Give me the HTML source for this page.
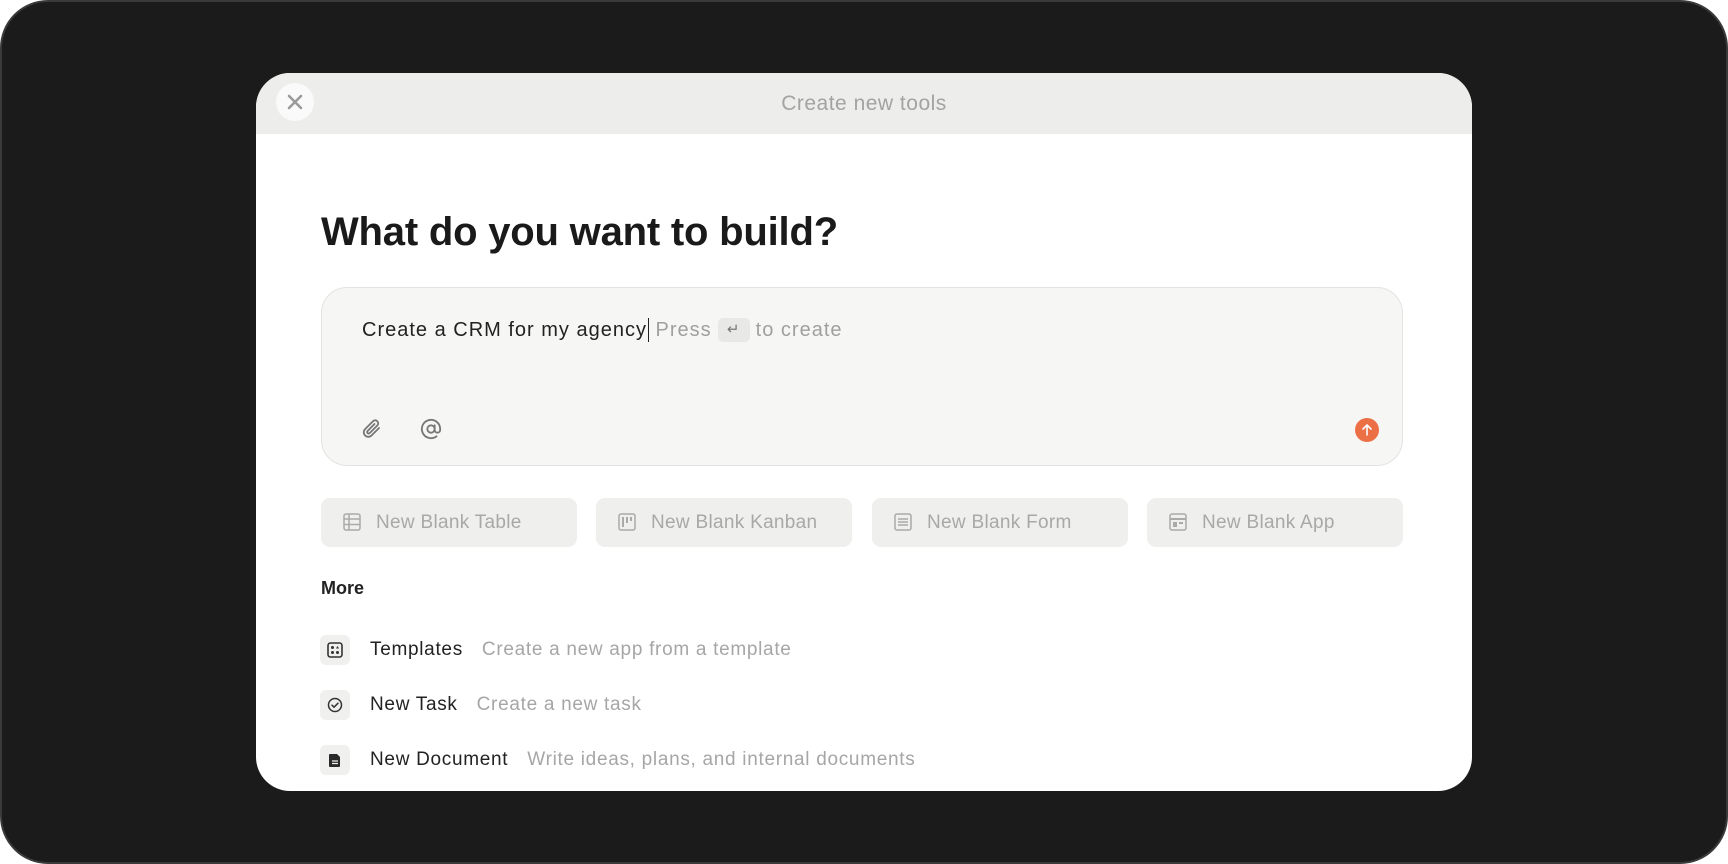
<!DOCTYPE html>
<html><head><style>
*{box-sizing:border-box;margin:0;padding:0}
html,body{width:1728px;height:864px;background:#fff;overflow:hidden;font-family:"Liberation Sans",sans-serif}
.frame{position:absolute;left:0;top:0;width:1728px;height:864px;background:#1b1b1b;border-radius:48px;border:2px solid #3a3a3a}
.modal{position:absolute;left:256px;top:73px;width:1216px;height:718px;background:#fff;border-radius:34px;overflow:hidden}
.hdr{height:61px;background:#ededeb;position:relative}
.hdr .t{position:absolute;left:0;right:0;top:0;line-height:61px;text-align:center;color:#a3a3a3;font-size:21px;letter-spacing:.5px}
.close{position:absolute;left:20px;top:10px;width:38px;height:38px;border-radius:50%;background:#fafafa}
h1{position:absolute;left:65px;top:137px;font-size:40px;font-weight:700;color:#1a1a1a;letter-spacing:-.2px}
.inp{position:absolute;left:65px;top:214px;width:1082px;height:179px;background:#f6f6f5;border:1.5px solid #e3e3e1;border-radius:26px}
.inp .tx{position:absolute;left:40px;top:30px;font-size:20px;color:#222;letter-spacing:1px;white-space:nowrap;line-height:24px}
.gray{color:#a0a0a0}
.kbd{display:inline-block;width:32px;height:24px;background:#e8e8e6;border-radius:5px;vertical-align:top;text-align:center;line-height:24px;font-size:15px;color:#777;margin:0 6px}
.send{position:absolute;left:1033px;top:130px;width:24px;height:24px;border-radius:50%;background:#ec7046}
.btn{position:absolute;top:425px;width:256px;height:49px;background:#efefed;border-radius:9px;color:#a8a8a8;font-size:19px;line-height:49px;padding-left:55px;letter-spacing:.3px}
.btn svg{position:absolute;left:22px;top:15px}
.more{position:absolute;left:65px;top:505px;font-size:18px;font-weight:700;color:#222}
.item{position:absolute;left:64px;height:30px;line-height:30px;font-size:19px;color:#222;letter-spacing:.7px;white-space:nowrap}
.item .ib{position:absolute;left:0;top:0;width:30px;height:30px;background:#f0f0ee;border-radius:6px}
.item .ib svg{position:absolute;left:7px;top:7px}
.item .l{position:absolute;left:50px}
.item .d{color:#a6a6a6;margin-left:19px}
</style></head><body>
<div class="frame"></div>
<div class="modal">
 <div class="hdr"><div class="t">Create new tools</div>
  <div class="close"><svg width="38" height="38" viewBox="0 0 38 38"><path d="M13 13L25 25M25 13L13 25" stroke="#9a9a9a" stroke-width="2.6" stroke-linecap="round"/></svg></div>
 </div>
 <h1>What do you want to build?</h1>
 <div class="inp">
  <div class="tx">Create a CRM for my agency<span style="border-left:1.5px solid #222;margin-left:1px;height:24px;display:inline-block;vertical-align:top"></span> <span class="gray">Press<span class="kbd">↵</span>to create</span></div>
  <svg style="position:absolute;left:38px;top:128px" width="24" height="26" viewBox="0 0 24 24"><path d="M19 11l-7.5 7.5a4.5 4.5 0 0 1-6.4-6.4L13 4.2a3 3 0 0 1 4.3 4.3L9.6 16.2a1.5 1.5 0 0 1-2.1-2.1L14.5 7" fill="none" stroke="#777" stroke-width="1.8" stroke-linecap="round"/></svg>
  <svg style="position:absolute;left:98px;top:130px" width="22" height="22" viewBox="0 0 24 24"><circle cx="12" cy="12" r="4" fill="none" stroke="#777" stroke-width="2"/><path d="M16 8v5a3 3 0 0 0 6 0v-1a10 10 0 1 0-4 8" fill="none" stroke="#777" stroke-width="2" stroke-linecap="round"/></svg>
  <div class="send"><svg width="24" height="24" viewBox="0 0 24 24"><path d="M12 17V7M8 11l4-4 4 4" fill="none" stroke="#fff" stroke-width="1.6" stroke-linecap="round" stroke-linejoin="round"/></svg></div>
 </div>
 <div class="btn" style="left:65px"><svg width="18" height="18" viewBox="0 0 18 18"><rect x="1" y="1" width="16" height="16" rx="2" fill="none" stroke="#aaa" stroke-width="1.5"/><path d="M1 6h16M1 11.5h16M6 1v16" stroke="#aaa" stroke-width="1.5"/></svg>New Blank Table</div>
 <div class="btn" style="left:340px"><svg width="18" height="18" viewBox="0 0 18 18"><rect x="1" y="1" width="16" height="16" rx="2" fill="none" stroke="#aaa" stroke-width="1.5"/><path d="M5 4v10M9 4v6M13 4v4" stroke="#aaa" stroke-width="2"/></svg>New Blank Kanban</div>
 <div class="btn" style="left:616px"><svg width="18" height="18" viewBox="0 0 18 18"><rect x="1" y="1" width="16" height="16" rx="2" fill="none" stroke="#aaa" stroke-width="1.5"/><path d="M4 6h10M4 9h10M4 12h10" stroke="#aaa" stroke-width="1.5"/></svg>New Blank Form</div>
 <div class="btn" style="left:891px"><svg width="18" height="18" viewBox="0 0 18 18"><rect x="1" y="1" width="16" height="16" rx="2" fill="none" stroke="#aaa" stroke-width="1.5"/><path d="M1 6h16" stroke="#aaa" stroke-width="2"/><rect x="4" y="9" width="4" height="5" fill="#aaa"/><rect x="10" y="9" width="4" height="2" fill="#aaa"/></svg>New Blank App</div>
 <div class="more">More</div>
 <div class="item" style="top:562px"><div class="ib"><svg width="16" height="16" viewBox="0 0 16 16"><rect x="1" y="1" width="14" height="14" rx="2.5" fill="none" stroke="#333" stroke-width="1.6"/><circle cx="5.5" cy="5.5" r="1.5" fill="#333"/><path d="M10.5 4l1.5 2.5h-3z" fill="#333"/><circle cx="5.5" cy="10.5" r="1.5" fill="#333"/><circle cx="10.5" cy="10.5" r="1.5" fill="#333"/></svg></div><div class="l">Templates<span class="d">Create a new app from a template</span></div></div>
 <div class="item" style="top:617px"><div class="ib"><svg width="16" height="16" viewBox="0 0 16 16"><circle cx="8" cy="8" r="6.5" fill="none" stroke="#333" stroke-width="1.5"/><path d="M5 8.2l2 2 4-4" fill="none" stroke="#333" stroke-width="1.5" stroke-linecap="round"/></svg></div><div class="l">New Task<span class="d">Create a new task</span></div></div>
 <div class="item" style="top:672px"><div class="ib"><svg width="16" height="16" viewBox="0 0 16 16"><path d="M3 2h7l3 3v9a1 1 0 0 1-1 1H3a1 1 0 0 1-1-1V3a1 1 0 0 1 1-1z" fill="#2a2a2a"/><path d="M5 9h6M5 11.5h6" stroke="#f0f0ee" stroke-width="1.3"/></svg></div><div class="l">New Document<span class="d">Write ideas, plans, and internal documents</span></div></div>
</div>
</body></html>
